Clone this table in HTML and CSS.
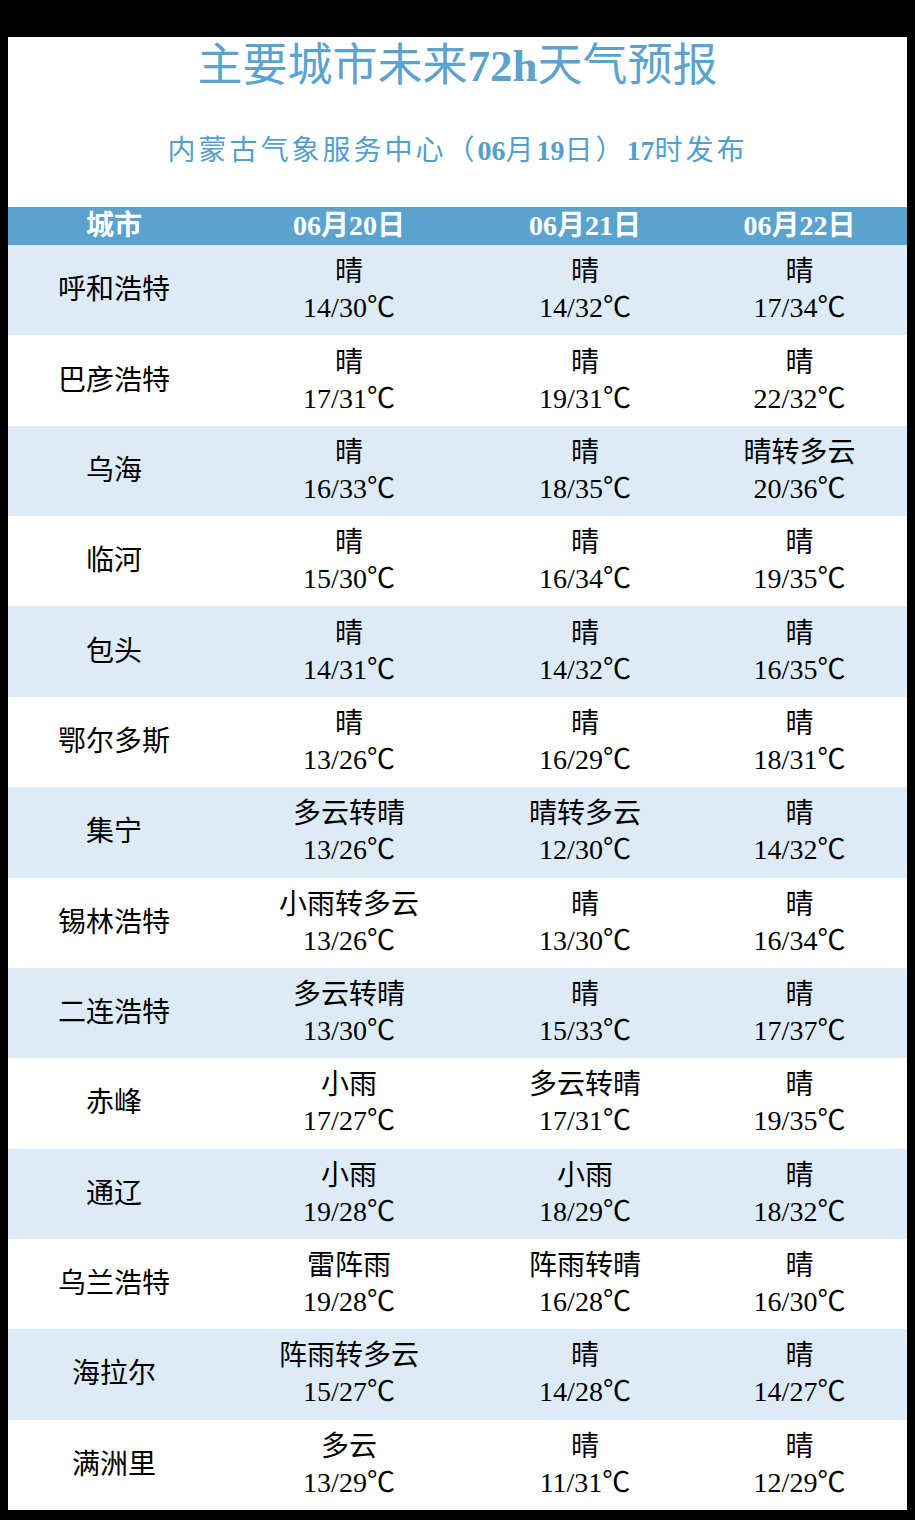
FILE: index.html
```html
<!DOCTYPE html>
<html lang="zh-CN">
<head>
<meta charset="utf-8">
<title>主要城市未来72h天气预报</title>
<link rel="stylesheet" href="styles.css">
</head>
<body>
<div class="page">
  <div class="sheet">
    <header class="head">
      <h1 class="title">主要城市未来<b>72h</b>天气预报</h1>
      <p class="subtitle">内蒙古气象服务中心（<b>06</b>月<b>19</b>日）<b>17</b>时发布</p>
    </header>
    <div class="table">
      <div class="row hrow"><div>城市</div><div>06月20日</div><div>06月21日</div><div>06月22日</div></div>
      <div class="row alt"><div class="city">呼和浩特</div><div>晴<br>14/30℃</div><div>晴<br>14/32℃</div><div>晴<br>17/34℃</div></div>
      <div class="row"><div class="city">巴彦浩特</div><div>晴<br>17/31℃</div><div>晴<br>19/31℃</div><div>晴<br>22/32℃</div></div>
      <div class="row alt"><div class="city">乌海</div><div>晴<br>16/33℃</div><div>晴<br>18/35℃</div><div>晴转多云<br>20/36℃</div></div>
      <div class="row"><div class="city">临河</div><div>晴<br>15/30℃</div><div>晴<br>16/34℃</div><div>晴<br>19/35℃</div></div>
      <div class="row alt"><div class="city">包头</div><div>晴<br>14/31℃</div><div>晴<br>14/32℃</div><div>晴<br>16/35℃</div></div>
      <div class="row"><div class="city">鄂尔多斯</div><div>晴<br>13/26℃</div><div>晴<br>16/29℃</div><div>晴<br>18/31℃</div></div>
      <div class="row alt"><div class="city">集宁</div><div>多云转晴<br>13/26℃</div><div>晴转多云<br>12/30℃</div><div>晴<br>14/32℃</div></div>
      <div class="row"><div class="city">锡林浩特</div><div>小雨转多云<br>13/26℃</div><div>晴<br>13/30℃</div><div>晴<br>16/34℃</div></div>
      <div class="row alt"><div class="city">二连浩特</div><div>多云转晴<br>13/30℃</div><div>晴<br>15/33℃</div><div>晴<br>17/37℃</div></div>
      <div class="row"><div class="city">赤峰</div><div>小雨<br>17/27℃</div><div>多云转晴<br>17/31℃</div><div>晴<br>19/35℃</div></div>
      <div class="row alt"><div class="city">通辽</div><div>小雨<br>19/28℃</div><div>小雨<br>18/29℃</div><div>晴<br>18/32℃</div></div>
      <div class="row"><div class="city">乌兰浩特</div><div>雷阵雨<br>19/28℃</div><div>阵雨转晴<br>16/28℃</div><div>晴<br>16/30℃</div></div>
      <div class="row alt"><div class="city">海拉尔</div><div>阵雨转多云<br>15/27℃</div><div>晴<br>14/28℃</div><div>晴<br>14/27℃</div></div>
      <div class="row"><div class="city">满洲里</div><div>多云<br>13/29℃</div><div>晴<br>11/31℃</div><div>晴<br>12/29℃</div></div>
    </div>
  </div>
</div>
</body>
</html>
```

FILE: styles.css
```css
html, body {
  margin: 0;
  padding: 0;
  background: #000;
}
body {
  font-family: "Liberation Serif", "Noto Sans CJK SC", serif;
  color: #000;
}
.page {
  width: 915px;
  height: 1520px;
  padding: 37px 0 0 8px;
  box-sizing: border-box;
}
.sheet {
  width: 899px;
  background: #fff;
}
.head {
  height: 170px;
  padding-top: 4px;
  box-sizing: border-box;
  text-align: center;
  color: #5ba3cf;
}
.title {
  margin: 0;
  font-size: 45px;
  line-height: 50px;
  font-weight: normal;
}
.title b {
  font-weight: bold;
}
.subtitle {
  margin: 43px 0 0;
  font-size: 28px;
  line-height: 34px;
  letter-spacing: 3px;
  font-weight: normal;
  color: #539ecd;
}
.subtitle b {
  font-weight: bold;
  letter-spacing: 0;
}
.table {
  display: flex;
  flex-direction: column;
}
.row {
  display: grid;
  grid-template-columns: 212px 258px 214px 215px;
  height: 90.36px;
  align-items: center;
  text-align: center;
  font-size: 28px;
  line-height: 36px;
}
.row.alt {
  background: #ddebf7;
}
.row.hrow {
  height: 38px;
  background: #5ba3cf;
  color: #fff;
  font-weight: bold;
  font-size: 28px;
  line-height: 38px;
}
.city {
  font-size: 28px;
}
```
